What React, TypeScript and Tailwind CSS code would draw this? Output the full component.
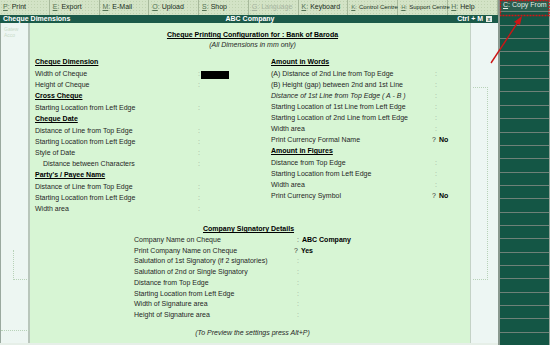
import React from "react";

type Row = {
  label: string;
  head?: boolean;
  q?: string;
  italic?: boolean;
  indent?: boolean;
  box?: boolean;
  value?: string;
};

const topButtons = [
  { k: "P", label: "Print" },
  { k: "E", label: "Export" },
  { k: "M", label: "E-Mail" },
  { k: "O", label: "Upload" },
  { k: "S", label: "Shop" },
  { k: "G", label: "Language", disabled: true },
  { k: "K", label: "Keyboard" },
  { k: "K", label: "Control Centre", tight: true },
  { k: "H", label: "Support Centre", tight: true },
  { k: "H", label: "Help" },
];

const leftRows: Row[] = [
  { label: "Cheque Dimension", head: true },
  { label: "Width of Cheque", box: true },
  { label: "Height of Cheque" },
  { label: "Cross Cheque", head: true },
  { label: "Starting Location from Left Edge" },
  { label: "Cheque Date", head: true },
  { label: "Distance of Line from Top Edge" },
  { label: "Starting Location from Left Edge" },
  { label: "Style of Date" },
  { label: "Distance between Characters", indent: true },
  { label: "Party's / Payee Name", head: true },
  { label: "Distance of Line from Top Edge" },
  { label: "Starting Location from Left Edge" },
  { label: "Width area" },
];

const rightRows: Row[] = [
  { label: "Amount in Words", head: true },
  { label: "(A) Distance of 2nd Line from Top Edge" },
  { label: "(B) Height (gap) between 2nd and 1st Line" },
  { label: "Distance of 1st Line from Top Edge ( A - B )", italic: true },
  { label: "Starting Location of 1st Line from Left Edge" },
  { label: "Starting Location of 2nd Line from Left Edge" },
  { label: "Width area" },
  { label: "Print Currency Formal Name", q: "No" },
  { label: "Amount in Figures", head: true },
  { label: "Distance from Top Edge" },
  { label: "Starting Location from Left Edge" },
  { label: "Width area" },
  { label: "Print Currency Symbol", q: "No" },
];

const signRows: Row[] = [
  { label: "Company Name on Cheque", value: "ABC Company" },
  { label: "Print Company Name on Cheque", q: "Yes" },
  { label: "Salutation of 1st Signatory (if 2 signatories)" },
  { label: "Salutation of 2nd or Single Signatory" },
  { label: "Distance from Top Edge" },
  { label: "Starting Location from Left Edge" },
  { label: "Width of Signature area" },
  { label: "Height of Signature area" },
];

function Field({ r, labelW, rowH }: { r: Row; labelW: string; rowH: string }) {
  if (r.head) {
    return (
      <div className="h-[12px] leading-[10px] font-bold underline underline-offset-1 text-black">
        {r.label}
      </div>
    );
  }
  return (
    <div className={`flex items-center whitespace-nowrap ${rowH}`}>
      <div className={`${labelW} ${r.indent ? "pl-[8px]" : ""} ${r.italic ? "italic" : ""}`}>
        {r.label}
      </div>
      {r.q ? (
        <div className="-ml-[3px] flex gap-[3px]">
          <span className="text-[#333]">?</span>
          <span className="font-bold text-black">{r.q}</span>
        </div>
      ) : (
        <div className="flex items-center">
          <span className={r.value ? "text-[#555]" : "text-[#9aaa9a]"}>:</span>
          {r.box && <span className="ml-[1px] inline-block h-[8px] w-[28px] bg-black" />}
          {r.value && <span className="ml-[3px] font-bold text-black">{r.value}</span>}
        </div>
      )}
    </div>
  );
}

export default function App() {
  return (
    <div className="relative h-[345px] w-[550px] overflow-hidden bg-[#97a79d] font-['Liberation_Sans',Arial,sans-serif] text-[7px] text-[#262626]">
      <div className="flex h-full">
        {/* main window */}
        <div className="flex w-[498px] flex-col">
          {/* top button bar */}
          <div className="flex h-[15px] bg-[#d3e3c6] bg-[radial-gradient(#bfd2b0_0.6px,transparent_0.6px)] bg-[length:3px_3px]">
            {topButtons.map((b, i) => (
              <div
                key={i}
                className={`flex w-[50px] items-center whitespace-nowrap border-r border-[#a7b99b] pl-[3px] ${
                  b.disabled ? "text-[#a6b4a0]" : "text-[#1a2e22]"
                } ${b.tight ? "text-[6px]" : "text-[7px]"}`}
              >
                <span className={`${b.disabled ? "" : "text-[#557455]"} underline`}>{b.k}</span>
                <span className={b.disabled ? "" : "text-[#557455]"}>:</span>
                <span className="ml-[2px]">{b.label}</span>
              </div>
            ))}
          </div>

          {/* title bar */}
          <div className="grid h-[8px] grid-cols-[1fr_auto_1fr] items-center bg-[#1b5a49] font-bold leading-[8px] text-white">
            <div className="pl-[3px]">Cheque Dimensions</div>
            <div className="pl-[2px]">ABC Company</div>
            <div className="flex items-center justify-end gap-[3px] pr-[6px]">
              <span>Ctrl + M</span>
              <span className="flex h-[6px] w-[6px] items-center justify-center bg-[#e8eee8] text-[5px] leading-none text-[#1b5a49]">
                x
              </span>
            </div>
          </div>

          {/* body */}
          <div className="flex flex-1 border-b-2 border-[#e6efe8]">
            {/* left strip */}
            <div className="flex w-[30px] flex-col border-l border-r-2 border-l-[#9aa99f] border-r-[#b9c6bb] bg-[#edf6f2] pl-[3px] pt-[3px] text-[5px] leading-[6px] text-[#c9dbc9]">
              <div>Gatew</div>
              <div>Acco</div>
              <div className="ml-[9px] mt-[212px] h-[30px] w-[14px] border-b border-l border-dotted border-[#b8d2b8]" />
              <div className="-ml-[3px] mt-[50px] w-[28px] border-t border-dotted border-[#b8d2b8]" />
            </div>

            {/* main panel */}
            <div className="flex w-[440px] flex-col bg-[#d7f5d4] pl-[5px]">
              <div className="mt-[7px] h-[10px] text-center font-bold leading-[10px] text-black">
                <span className="underline underline-offset-1">
                  Cheque Printing Configuration for : Bank of Baroda
                </span>
              </div>
              <div className="h-[9px] text-center italic leading-[9px]">(All Dimensions in mm only)</div>

              <div className="mt-[8px] flex items-start">
                <div className="w-[236px]">
                  {leftRows.map((r, i) => (
                    <Field key={i} r={r} labelW="w-[163px]" rowH="h-[11px]" />
                  ))}
                </div>
                <div>
                  {rightRows.map((r, i) => (
                    <Field key={i} r={r} labelW="w-[164px]" rowH="h-[11px]" />
                  ))}
                </div>
              </div>

              <div className="mt-[9px] h-[11px] pl-[168px] font-bold leading-[10px] text-black">
                <span className="underline underline-offset-1">Company Signatory Details</span>
              </div>
              <div className="pl-[99px]">
                {signRows.map((r, i) => (
                  <Field key={i} r={r} labelW="w-[163px]" rowH="h-[10.7px]" />
                ))}
              </div>
              <div className="mt-[6px] h-[11px] text-center italic leading-[11px]">
                (To Preview the settings press Alt+P)
              </div>
            </div>

            {/* right strip */}
            <div className="flex w-[28px] flex-col border-l border-[#c4d2c6] bg-[#edf6f3]">
              <div className="ml-[2px] mt-[64px] h-[193px] w-[15px] border-r border-t border-b border-dotted border-[#b8d2b8]" />
            </div>
          </div>
        </div>

        {/* right button panel */}
        <div className="flex w-[52px] flex-col border-l-2 border-[#8a998f] pr-[1px]">
          <div className="flex h-[15px] items-center whitespace-nowrap bg-[#2a5e4e] pl-[3px] text-[7px] text-[#e4ece6]">
            <span className="underline">C</span>
            <span>:</span>
            <span className="ml-[2px]">Copy From</span>
          </div>
          {Array.from({ length: 25 }).map((_, i) => (
            <div key={i} className="h-[13.35px] shrink-0 border-t border-[#6f8178] bg-[#145645]" />
          ))}
        </div>
      </div>

      {/* annotation overlay */}
      <svg className="pointer-events-none absolute left-0 top-0" width="550" height="345">
        <rect x="500.5" y="0.5" width="48.5" height="15" fill="none" stroke="#d41414" strokeWidth="1.3" strokeDasharray="2 1" />
        <line x1="491" y1="63" x2="518" y2="22" stroke="#cc1515" strokeWidth="1.4" />
        <polygon points="522,16 514,22 520,25" fill="#cc1515" />
      </svg>
    </div>
  );
}
